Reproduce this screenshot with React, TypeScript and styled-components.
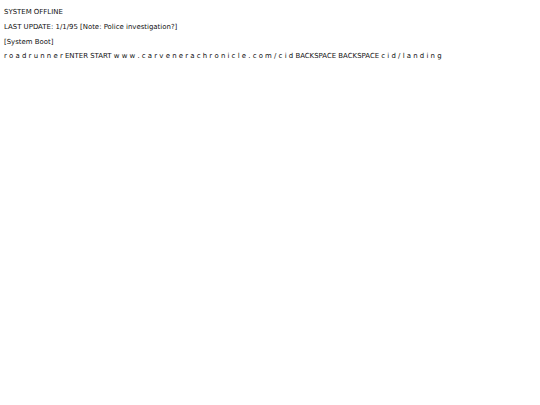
import React from "react";
import styled, { createGlobalStyle } from "styled-components";

const Global = createGlobalStyle`
  html, body { margin: 0; padding: 0; background: #fff; }
`;

const Page = styled.div`
  padding: 5px 4px 0;
  font-family: "DejaVu Sans", Verdana, sans-serif;
  font-size: 6.95px;
  color: #111;
`;

const Line = styled.p`
  margin: 0;
  line-height: 14.8px;
  white-space: pre;
`;

const lines = [
  "SYSTEM OFFLINE",
  "LAST UPDATE: 1/1/95 [Note: Police investigation?]",
  "[System Boot]",
  "r o a d r u n n e r ENTER START w w w . c a r v e n e r a c h r o n i c l e . c o m / c i d BACKSPACE BACKSPACE c i d / l a n d i n g",
];

export default function App() {
  return (
    <>
      <Global />
      <Page>
        {lines.map((l) => (
          <Line key={l}>{l}</Line>
        ))}
      </Page>
    </>
  );
}
